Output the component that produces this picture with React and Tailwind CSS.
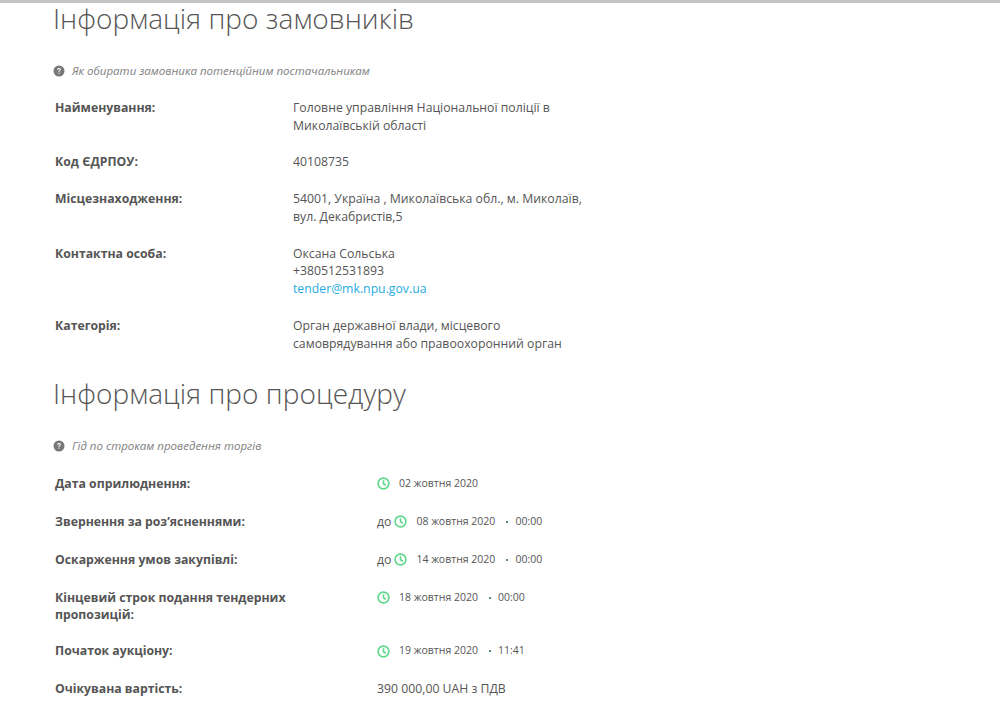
import React from 'react';

const CUSTOMER = [
  { label: 'Найменування:', lines: ['Головне управління Національної поліції в', 'Миколаївській області'] },
  { label: 'Код ЄДРПОУ:', lines: ['40108735'] },
  { label: 'Місцезнаходження:', lines: ['54001, Україна , Миколаївська обл., м. Миколаїв,', 'вул. Декабристів,5'] },
  { label: 'Контактна особа:', lines: ['Оксана Сольська', '+380512531893'], email: 'tender@mk.npu.gov.ua' },
  { label: 'Категорія:', lines: ['Орган державної влади, місцевого', 'самоврядування або правоохоронний орган'] },
];

const DATES = [
  { label: ['Дата оприлюднення:'], date: '02 жовтня 2020' },
  { label: ['Звернення за роз’ясненнями:'], prefix: 'до', date: '08 жовтня 2020', time: '00:00' },
  { label: ['Оскарження умов закупівлі:'], prefix: 'до', date: '14 жовтня 2020', time: '00:00' },
  { label: ['Кінцевий строк подання тендерних', 'пропозицій:'], date: '18 жовтня 2020', time: '00:00' },
  { label: ['Початок аукціону:'], date: '19 жовтня 2020', time: '11:41' },
];

function HelpIcon() {
  return (
    <svg width="12" height="12" viewBox="0 0 12 12" className="shrink-0">
      <circle cx="6" cy="6" r="5.5" fill="#777" />
      <path d="M4.1 4.7 C4.2 3.5 5 3 6 3 C7.1 3 7.9 3.6 7.9 4.5 C7.9 5.6 6.4 5.6 6.4 6.9 L5.5 6.9 C5.5 5.3 6.9 5.3 6.9 4.6 C6.9 4.1 6.5 3.9 6 3.9 C5.5 3.9 5.2 4.2 5.1 4.8 Z" fill="#fff" />
      <rect x="5.4" y="7.6" width="1.1" height="1.1" fill="#fff" />
    </svg>
  );
}

function ClockIcon() {
  return (
    <svg width="13" height="13" viewBox="0 0 13 13" fill="none" stroke="#5fd88c" strokeWidth="1.6" className="shrink-0">
      <circle cx="6.5" cy="6.5" r="5.4" />
      <path d="M6.5 3.2 V6.8 L8.9 8.3" />
    </svg>
  );
}

function Heading({ children }) {
  return <h2 className="text-[28px] leading-[34px] font-light text-[#555] tracking-[0.05px]">{children}</h2>;
}

function Hint({ children }) {
  return (
    <div className="flex items-center gap-[7px] text-[11.5px] italic text-[#808080]">
      <HelpIcon />
      <span>{children}</span>
    </div>
  );
}

export default function App() {
  return (
    <div className="min-h-[713px] bg-white text-[12.25px] leading-[17.86px] text-[#555] [font-family:'Open_Sans',sans-serif] overflow-hidden">
      <div className="h-[3px] bg-[#c4c4c4]" />
      <div className="pl-[53px] -mt-[2px]">
        <Heading>Інформація про замовників</Heading>
        <div className="mt-[27px] mb-[19px]"><Hint>Як обирати замовника потенційним постачальникам</Hint></div>
        <div className="pl-[2px] flex flex-col gap-[18.8px]">
          {CUSTOMER.map(row => (
            <div key={row.label} className="flex">
              <div className="w-[238px] shrink-0 font-bold">{row.label}</div>
              <div>
                {row.lines.map(l => <div key={l}>{l}</div>)}
                {row.email && <a className="block text-[#29abe2]">{row.email}</a>}
              </div>
            </div>
          ))}
        </div>
        <div className="mt-[23px]"><Heading>Інформація про процедуру</Heading></div>
        <div className="mt-[27px] mb-[20px]"><Hint>Гід по строкам проведення торгів</Hint></div>
        <div className="pl-[2px] flex flex-col gap-[20px]">
          {DATES.map(row => (
            <div key={row.date} className={row.label.length > 1 ? 'flex -mb-[2px]' : 'flex'}>
              <div className="w-[322px] shrink-0 font-bold">
                {row.label.map(l => <div key={l}>{l}</div>)}
              </div>
              <div className="flex items-center h-[18px] text-[10.5px]">
                {row.prefix && <span className="text-[12.25px] mr-[3px]">{row.prefix}</span>}
                <ClockIcon />
                <span className="ml-[9px]">{row.date}</span>
                {row.time && <span className="w-[2px] h-[2px] ml-[11px] mr-[7px] bg-[#5a8f6c]" />}
                {row.time && <span>{row.time}</span>}
              </div>
            </div>
          ))}
          <div className="flex">
            <div className="w-[322px] shrink-0 font-bold">Очікувана вартість:</div>
            <div>390 000,00 UAH з ПДВ</div>
          </div>
        </div>
      </div>
    </div>
  );
}
